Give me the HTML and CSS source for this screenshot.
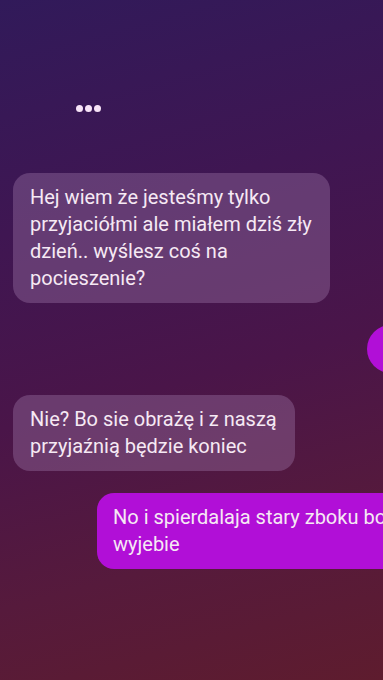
FILE: index.html
```html
<!DOCTYPE html>
<html lang="pl">
<head>
    <meta charset="UTF-8">
    <meta name="viewport" content="width=device-width, initial-scale=1.0">
    <title>Czat</title>
    <link rel="stylesheet" href="styles.css">
</head>
<body>
    <div class="chat">
        <div class="typing">
            <span class="dot"></span>
            <span class="dot"></span>
            <span class="dot"></span>
        </div>

        <div class="bubble in first">
            Hej wiem że jesteśmy tylko przyjaciółmi ale miałem dziś zły dzień.. wyślesz coś na pocieszenie?
        </div>

        <div class="bubble out peek"></div>

        <div class="bubble in second">
            Nie? Bo sie obrażę i z naszą przyjaźnią będzie koniec
        </div>

        <div class="bubble out wide">
            No i spierdalaja stary zboku bo cie<br>wyjebie
        </div>
    </div>
</body>
</html>
```

FILE: styles.css
```css
html, body {
    margin: 0;
    padding: 0;
    height: 100%;
}

body {
    overflow: hidden;
    background: linear-gradient(165deg, #311a5a 0%, #3f1652 30%, #4a1549 55%, #561a3c 78%, #5e1c2e 100%);
    font-family: 'Roboto', 'Noto Sans', sans-serif;
    color: #f6e9f4;
}

.chat {
    display: flex;
    flex-direction: column;
    align-items: flex-start;
    gap: 22px;
    padding: 105px 0 0 13px;
}

.typing {
    display: flex;
    gap: 2px;
    margin-left: 63px;
    margin-bottom: 39px;
}

.dot {
    width: 7px;
    height: 7px;
    border-radius: 50%;
    background: #f7e3f7;
}

.bubble {
    box-sizing: border-box;
    flex-shrink: 0;
    padding: 11px 17px;
    border-radius: 17px;
    font-size: 20px;
    line-height: 27px;
}

.in {
    background: rgba(160, 120, 170, 0.38);
}

.out {
    background: #b10fd7;
}

.first {
    width: 317px;
}

.second {
    width: 282px;
}

/* bańka prawie cała poza ekranem */
.peek {
    width: 100px;
    height: 48px;
    margin-left: 354px;
    border-radius: 24px;
}

.wide {
    width: 380px;
    margin-left: 84px;
    padding-left: 16px;
}
```
